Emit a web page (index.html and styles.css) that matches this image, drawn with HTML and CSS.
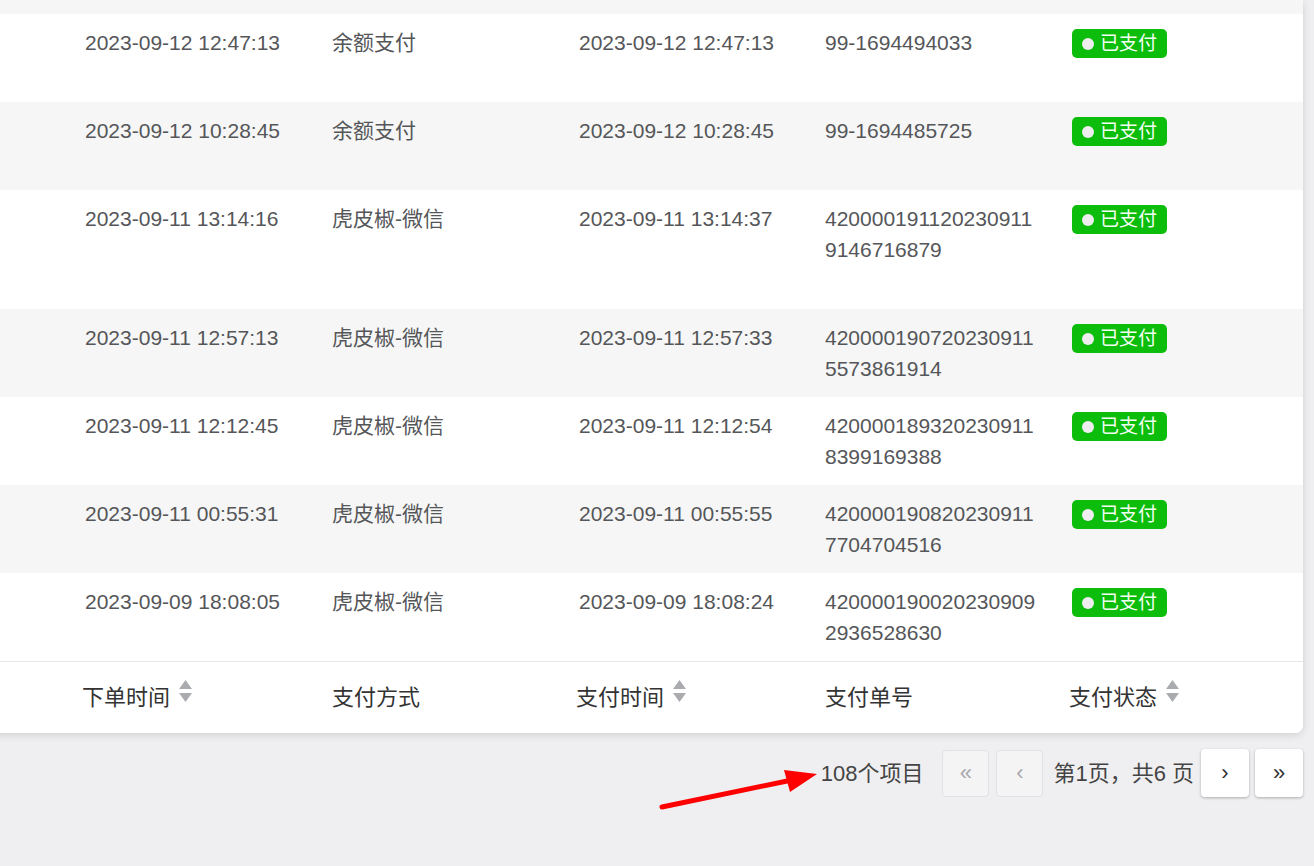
FILE: index.html
```html
<!DOCTYPE html>
<html lang="zh-CN">
<head>
<meta charset="utf-8">
<title>订单列表</title>
<link rel="stylesheet" href="styles.css">
</head>
<body>
<div class="page">
  <div class="card">
    <div class="stripe-top"></div>
    <div class="row">
      <div class="cell">2023-09-12 12:47:13</div>
      <div class="cell">余额支付</div>
      <div class="cell">2023-09-12 12:47:13</div>
      <div class="cell num">99-1694494033</div>
      <div class="cell"><span class="badge"><span class="dot"></span>已支付</span></div>
    </div>
    <div class="row alt">
      <div class="cell">2023-09-12 10:28:45</div>
      <div class="cell">余额支付</div>
      <div class="cell">2023-09-12 10:28:45</div>
      <div class="cell num">99-1694485725</div>
      <div class="cell"><span class="badge"><span class="dot"></span>已支付</span></div>
    </div>
    <div class="row tall">
      <div class="cell">2023-09-11 13:14:16</div>
      <div class="cell">虎皮椒-微信</div>
      <div class="cell">2023-09-11 13:14:37</div>
      <div class="cell num">4200001911202309119146716879</div>
      <div class="cell"><span class="badge"><span class="dot"></span>已支付</span></div>
    </div>
    <div class="row alt">
      <div class="cell">2023-09-11 12:57:13</div>
      <div class="cell">虎皮椒-微信</div>
      <div class="cell">2023-09-11 12:57:33</div>
      <div class="cell num">4200001907202309115573861914</div>
      <div class="cell"><span class="badge"><span class="dot"></span>已支付</span></div>
    </div>
    <div class="row">
      <div class="cell">2023-09-11 12:12:45</div>
      <div class="cell">虎皮椒-微信</div>
      <div class="cell">2023-09-11 12:12:54</div>
      <div class="cell num">4200001893202309118399169388</div>
      <div class="cell"><span class="badge"><span class="dot"></span>已支付</span></div>
    </div>
    <div class="row alt">
      <div class="cell">2023-09-11 00:55:31</div>
      <div class="cell">虎皮椒-微信</div>
      <div class="cell">2023-09-11 00:55:55</div>
      <div class="cell num">4200001908202309117704704516</div>
      <div class="cell"><span class="badge"><span class="dot"></span>已支付</span></div>
    </div>
    <div class="row">
      <div class="cell">2023-09-09 18:08:05</div>
      <div class="cell">虎皮椒-微信</div>
      <div class="cell">2023-09-09 18:08:24</div>
      <div class="cell num">4200001900202309092936528630</div>
      <div class="cell"><span class="badge"><span class="dot"></span>已支付</span></div>
    </div>
    <div class="row head">
      <div class="hcell sortable">下单时间<svg class="sort" width="13" height="22" viewBox="0 0 13 22"><polygon points="6.5,0 13,9 0,9"/><polygon points="0,13 13,13 6.5,22"/></svg></div>
      <div class="hcell">支付方式</div>
      <div class="hcell sortable">支付时间<svg class="sort" width="13" height="22" viewBox="0 0 13 22"><polygon points="6.5,0 13,9 0,9"/><polygon points="0,13 13,13 6.5,22"/></svg></div>
      <div class="hcell">支付单号</div>
      <div class="hcell sortable">支付状态<svg class="sort" width="13" height="22" viewBox="0 0 13 22"><polygon points="6.5,0 13,9 0,9"/><polygon points="0,13 13,13 6.5,22"/></svg></div>
    </div>
  </div>

  <div class="pager">
    <span class="total">108个项目</span>
    <span class="pbtn disabled">«</span>
    <span class="pbtn disabled gap-lg">‹</span>
    <span class="pinfo">第1页，共6 页</span>
    <span class="pbtn">›</span>
    <span class="pbtn">»</span>
  </div>

  <svg class="annot" width="1314" height="866" viewBox="0 0 1314 866">
    <line x1="662" y1="807" x2="792" y2="780" stroke="#f00" stroke-width="5" stroke-linecap="round"/>
    <polygon points="817,774 784,770 790,792" fill="#f00"/>
  </svg>
</div>
</body>
</html>
```

FILE: styles.css
```css
* { box-sizing: border-box; }
html, body {
  margin: 0;
  padding: 0;
}
body {
  background: #efeff1;
  font-family: "Liberation Sans", "Noto Sans CJK SC", sans-serif;
  overflow: hidden;
  width: 1314px;
  height: 866px;
}
.page {
  position: relative;
  width: 1314px;
  height: 866px;
}
.card {
  margin-left: -12px;
  width: 1315px;
  background: #fff;
  border-bottom-right-radius: 8px;
  border-bottom-left-radius: 8px;
  box-shadow: 0 2px 8px rgba(0, 0, 0, 0.13);
  overflow: hidden;
}
.stripe-top {
  height: 14px;
  background: #f6f6f6;
}
.row {
  display: grid;
  grid-template-columns: 247px 247px 246px 247px 1fr;
  padding-left: 97px;
  height: 88px;
  background: #fff;
}
.row.alt { background: #f6f6f6; }
.row.tall { height: 119px; }
.cell {
  padding-top: 13px;
  font-size: 21px;
  line-height: 31px;
  color: #555659;
}
.cell.num {
  padding-right: 30px;
  word-break: break-all;
}
.badge {
  display: inline-flex;
  align-items: center;
  height: 29px;
  margin-top: 2px;
  padding: 0 10px;
  background: #0cbd0c;
  border-radius: 5px;
  color: #f4fff4;
  font-size: 19px;
  line-height: 29px;
  vertical-align: top;
}
.dot {
  width: 12px;
  height: 12px;
  border-radius: 50%;
  background: #eeeef0;
  margin-right: 6px;
}
.row.head {
  height: 72px;
  border-top: 1px solid #e6e6e6;
  align-items: center;
  padding-bottom: 5px;
}
.hcell {
  display: flex;
  align-items: center;
  font-size: 22px;
  color: #333;
}
.hcell.sortable { margin-left: -3px; }
.sort {
  margin-left: 9px;
  fill: #a9abae;
  transform: translateY(-4px);
}
.pager {
  display: flex;
  align-items: center;
  justify-content: flex-end;
  width: 1303px;
  margin-top: 16px;
}
.total {
  font-size: 22px;
  color: #444;
  margin-right: 19px;
  padding-bottom: 5px;
}
.pinfo {
  font-size: 22px;
  color: #444;
  margin-right: 7px;
  padding-bottom: 5px;
}
.pbtn {
  display: flex;
  align-items: center;
  justify-content: center;
  width: 48px;
  height: 48px;
  border-radius: 4px;
  background: #fff;
  box-shadow: 0 1px 3px rgba(0, 0, 0, 0.28);
  color: #333;
  font-size: 22px;
  margin-right: 6px;
}
.pbtn:last-child { margin-right: 0; }
.pbtn.disabled {
  width: 47px;
  height: 47px;
  background: #f4f4f5;
  border: 1px solid #e1e1e3;
  box-shadow: none;
  color: #a8a8ac;
  margin-right: 7px;
}
.pbtn.disabled.gap-lg { margin-right: 10px; }
.annot {
  position: absolute;
  left: 0;
  top: 0;
  pointer-events: none;
}
```
